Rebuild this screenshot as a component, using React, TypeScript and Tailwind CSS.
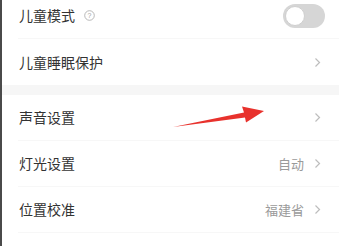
const FONT = { fontFamily: '"Noto Sans CJK SC", "Noto Sans", sans-serif' };

function Chevron() {
  return (
    <svg width="7" height="11" viewBox="0 0 7 11" className="ml-[10px]">
      <path d="M1.5 1.5 L5.5 5.5 L1.5 9.5" fill="none" stroke="#bdbdbd" strokeWidth="1.2" />
    </svg>
  );
}

function Row({
  label,
  value,
  extra,
  right,
  divider = true,
}: {
  label: string;
  value?: string;
  extra?: React.ReactNode;
  right?: React.ReactNode;
  divider?: boolean;
}) {
  return (
    <div className="pl-[16px]">
      <div
        className={`h-[46px] flex items-center pr-[18px] ${divider ? "border-b border-[#f7f7f7]" : ""}`}
      >
        <span className="pl-[1px] text-[14px] text-[#333333]">{label}</span>
        {extra}
        <div className="flex-1" />
        {right ?? (
          <>
            {value && <span className="text-[13px] text-[#9a9a9a]">{value}</span>}
            <Chevron />
          </>
        )}
      </div>
    </div>
  );
}

function Toggle() {
  return (
    <div className="w-[42px] h-[24px] rounded-full bg-[#d6d6d6] p-[2px] flex items-center mr-[-4px]">
      <div className="w-[20px] h-[20px] rounded-full bg-white border border-[#cfcfcf]" />
    </div>
  );
}

function HelpIcon() {
  return (
    <svg width="11" height="11" viewBox="0 0 11 11" className="ml-[9px]">
      <circle cx="5.5" cy="5.5" r="4.8" fill="none" stroke="#b0b0b0" strokeWidth="0.9" />
      <text x="5.5" y="8" textAnchor="middle" fontSize="7" fill="#a0a0a0" fontFamily="Liberation Sans, sans-serif">
        ?
      </text>
    </svg>
  );
}

export default function App() {
  return (
    <div className="w-[339px] h-[246px] overflow-hidden bg-white relative flex" style={FONT}>
      <div className="w-[2px] bg-[#4a4a4a] shrink-0" />
      <div className="flex-1 flex flex-col">
        <div className="-mt-[7px]">
          <Row label="儿童模式" extra={<HelpIcon />} right={<Toggle />} />
          <Row label="儿童睡眠保护" divider={false} />
        </div>
        <div className="h-[10px] bg-[#f6f6f6]" />
        <Row label="声音设置" />
        <Row label="灯光设置" value="自动" />
        <Row label="位置校准" value="福建省" />
      </div>
      {/* red annotation arrow lying over the list */}
      <svg className="absolute left-0 top-0 pointer-events-none" width="339" height="246">
        <path d="M173 127 L244 112.5 L242 106.5 L264 111 L246 122.5 L245 117.5 Z" fill="#e8322d" />
      </svg>
    </div>
  );
}
